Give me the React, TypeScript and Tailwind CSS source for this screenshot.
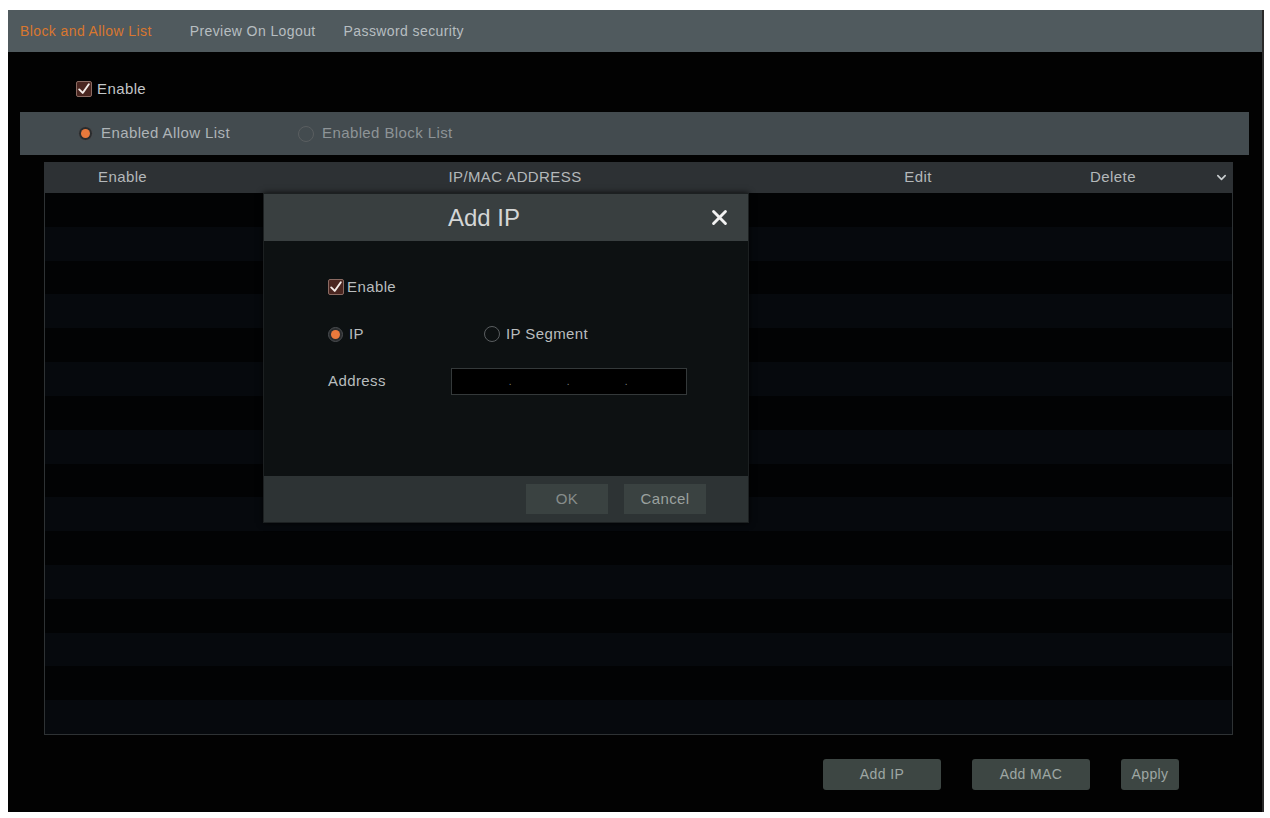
import React from 'react'

const font = { fontFamily: '"Liberation Sans", Arial, sans-serif' }

function CheckBox() {
  return (
    <span className="inline-flex w-[16px] h-[16px] items-center justify-center border border-[#8a6a62] bg-[#4a2620] rounded-[2px]">
      <svg viewBox="0 0 16 16" className="w-[14px] h-[14px]" fill="none">
        <path d="M2.5 8.5L6.5 12.5L13.5 2.5" stroke="#f4ece8" strokeWidth="2.2" strokeLinecap="round" strokeLinejoin="round" />
      </svg>
    </span>
  )
}

function Radio({ on }: { on: boolean }) {
  return on ? (
    <span className="inline-flex w-[15px] h-[15px] rounded-full border border-[#4a4d50] bg-[#2a2c2e] items-center justify-center">
      <span className="w-[9px] h-[9px] rounded-full bg-[#e9793c]" />
    </span>
  ) : (
    <span className="inline-block w-[16px] h-[16px] rounded-full border border-[#5a5e60] bg-transparent" />
  )
}

export default function App() {
  const rows = Array.from({ length: 16 })

  return (
    <div className="w-[1270px] h-[818px] bg-white pt-[10px] pl-[8px]" style={font}>
      <div className="relative w-[1256px] h-[802px] bg-[#020202] flex flex-col border-r-2 border-[#2a2a2a]">
        {/* Tabs */}
        <div className="h-[42px] bg-[#505a5e] flex items-center pl-[12px] text-[14px] tracking-[0.4px]">
          <span className="text-[#d9772f]">Block and Allow List</span>
          <span className="text-[#b7bec1] ml-[38px]">Preview On Logout</span>
          <span className="text-[#b7bec1] ml-[28px]">Password security</span>
        </div>

        {/* Enable */}
        <div className="h-[60px] flex items-center pl-[68px] gap-[5px] pt-[14px]">
          <CheckBox />
          <span className="text-[15px] tracking-[0.4px] text-[#c2c6c8]">Enable</span>
        </div>

        {/* Allow / Block */}
        <div className="ml-[12px] mr-[13px] h-[43px] bg-[#434b4f] flex items-center pl-[58px] text-[15px] tracking-[0.4px] text-[#aeb4b7]">
          <div className="flex items-center gap-[8px] w-[220px]">
            <Radio on />
            <span>Enabled Allow List</span>
          </div>
          <div className="flex items-center gap-[8px]">
            <Radio on={false} />
            <span className="text-[#8e9497]">Enabled Block List</span>
          </div>
        </div>

        {/* Table */}
        <div className="ml-[36px] w-[1189px] mt-[7px] flex flex-col">
          <div className="h-[31px] bg-[#2d3134] flex items-center text-[15px] tracking-[0.4px] text-[#b4b8ba]">
            <span className="w-[360px] pl-[54px]">Enable</span>
            <span className="w-[222px] text-center">IP/MAC ADDRESS</span>
            <span className="w-[212px]" />
            <span className="w-[160px] text-center">Edit</span>
            <span className="w-[40px]" />
            <span className="w-[150px] text-center">Delete</span>
            <span className="flex-1 flex justify-end pr-[6px]">
              <svg viewBox="0 0 12 12" className="w-[11px] h-[11px]" fill="none">
                <path d="M2 4L6 8L10 4" stroke="#c9cdcf" strokeWidth="1.8" strokeLinecap="round" strokeLinejoin="round" />
              </svg>
            </span>
          </div>
          <div className="h-[542px] border-x border-b border-[#2e3234] flex flex-col">
            {rows.map((_, i) => (
              <div key={i} className={`flex-1 ${i % 2 === 1 ? 'bg-[#06090d]' : 'bg-[#020304]'}`} />
            ))}
          </div>
        </div>

        {/* Bottom buttons */}
        <div className="flex justify-end items-center gap-[31px] pr-[83px] mt-[24px] text-[14px] tracking-[0.4px] text-[#9ea7a3]">
          <button className="w-[118px] h-[31px] bg-[#3d4643] rounded-[3px]">Add IP</button>
          <button className="w-[118px] h-[31px] bg-[#3d4643] rounded-[3px]">Add MAC</button>
          <button className="w-[58px] h-[31px] bg-[#3d4643] rounded-[3px]">Apply</button>
        </div>

        {/* Add IP dialog */}
        <div className="absolute left-[255px] top-[183px] w-[486px] h-[330px] flex flex-col border border-[#1c2021] shadow-[0_0_6px_rgba(0,0,0,0.8)]">
          <div className="h-[47px] bg-[#393f40] flex items-center relative">
            <span className="flex-1 text-center text-[24px] text-[#d4d6d6] pr-[44px]">Add IP</span>
            <svg viewBox="0 0 20 20" className="absolute right-[20px] top-[15px] w-[17px] h-[17px]" fill="none">
              <path d="M3 3L17 17M17 3L3 17" stroke="#f2f2f2" strokeWidth="3.4" strokeLinecap="round" />
            </svg>
          </div>
          <div className="flex-1 bg-[#0d1112] pl-[64px] pt-[36px] text-[15px] tracking-[0.4px] text-[#b9bdbe]">
            <div className="flex items-center gap-[3px] h-[20px]">
              <CheckBox />
              <span>Enable</span>
            </div>
            <div className="flex items-center h-[20px] mt-[27px]">
              <div className="flex items-center gap-[6px] w-[156px]">
                <Radio on />
                <span>IP</span>
              </div>
              <div className="flex items-center gap-[6px]">
                <Radio on={false} />
                <span>IP Segment</span>
              </div>
            </div>
            <div className="flex items-center mt-[24px]">
              <span className="w-[123px]">Address</span>
              <div className="w-[236px] h-[27px] bg-[#000000] border border-[#34393a] flex items-center text-[#7d8283] text-[10px]">
                <span className="w-[60px] text-right">.</span>
                <span className="w-[58px] text-right">.</span>
                <span className="w-[58px] text-right">.</span>
              </div>
            </div>
          </div>
          <div className="h-[46px] bg-[#2d3334] flex items-center justify-end gap-[16px] pr-[42px] text-[15px] tracking-[0.4px] text-[#9aa19f]">
            <button className="w-[82px] h-[30px] bg-[#3a4241] text-[#868d8b]">OK</button>
            <button className="w-[82px] h-[30px] bg-[#3a4241]">Cancel</button>
          </div>
        </div>
      </div>
    </div>
  )
}
